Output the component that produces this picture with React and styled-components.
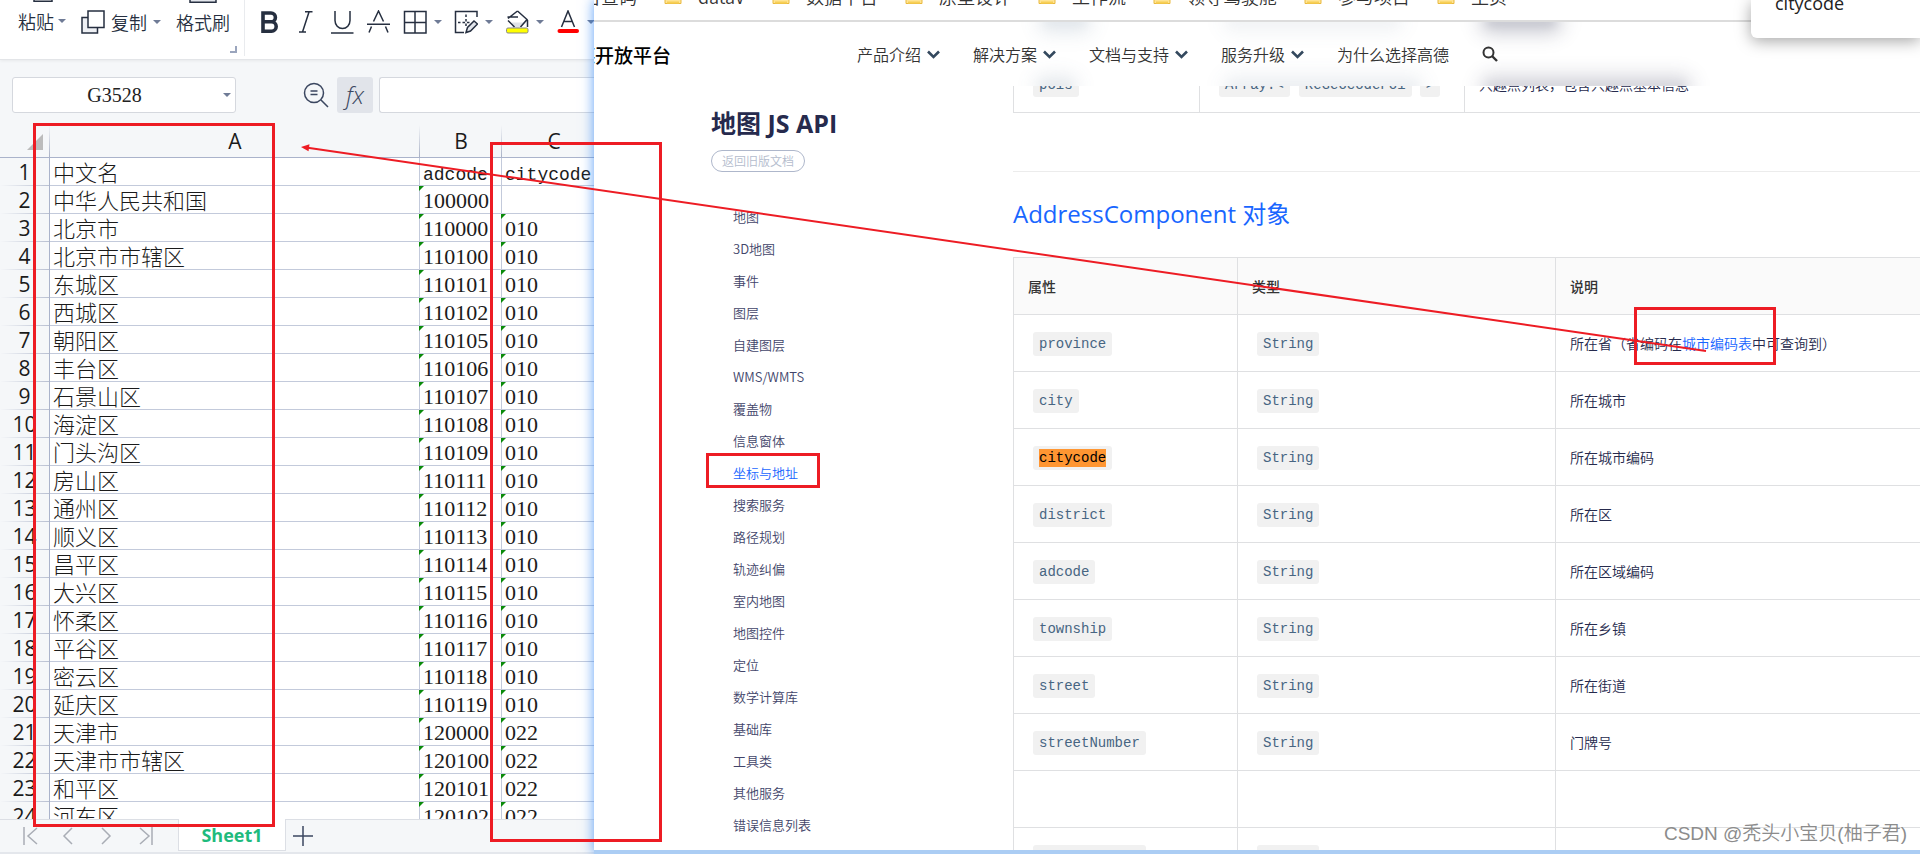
import styled, { createGlobalStyle, css } from "styled-components";

const sans = `"Open Sans", "Noto Sans CJK SC", sans-serif`;
const cjk = `"Noto Sans CJK SC", "Open Sans", sans-serif`;
const mono = `"Liberation Mono", "Noto Sans CJK SC", monospace`;
const red = "#ed1c24";

const GlobalStyle = createGlobalStyle`
  * {
    box-sizing: border-box;
  }

  body {
    margin: 0;
    font-family: ${sans};
    background: #fff;
  }

  button,
  input {
    padding: 0;
    border: none;
    background: none;
    font: inherit;
    color: inherit;
  }

  a {
    color: inherit;
    text-decoration: none;
  }
`;

const Desktop = styled.div`
  position: relative;
  display: flex;
  height: 100vh;
  overflow: hidden;
`;

/* ---------- spreadsheet ---------- */

const Sheet = styled.section`
  flex: 0 0 594px;
  display: flex;
  flex-direction: column;
  overflow: hidden;
  background: #f5f7f9;
`;

const Toolbar = styled.div`
  display: flex;
  flex: none;
  height: 60px;
  padding-left: 18px;
  background: #fff;
  border-bottom: 1px solid #e3e5e8;
  box-shadow: 0 1px 3px rgba(0, 0, 0, 0.06);
  color: #262f40;
  font-family: ${cjk};
  font-size: 18px;
  font-weight: 350;
  line-height: 26px;
  white-space: nowrap;
  overflow: hidden;
`;

const ClipGroup = styled.div`
  display: flex;
  flex: none;
  align-items: flex-start;
  gap: 15px;
`;

const TallButton = styled.button`
  display: flex;
  flex-direction: column;
  align-items: center;
  gap: 6px;
  margin-top: -20px;
`;

const Label = styled.span`
  display: flex;
  align-items: center;
  gap: 4px;
`;

const CopyButton = styled.button`
  display: flex;
  align-items: center;
  gap: 6px;
  margin-top: 9px;
`;

const Launcher = styled.button`
  flex: none;
  align-self: flex-end;
  width: 7px;
  height: 7px;
  margin-bottom: 6px;
  border-right: 2px solid #9aa5bd;
  border-bottom: 2px solid #9aa5bd;
`;

const FontGroup = styled.div`
  display: flex;
  flex: none;
  align-items: flex-start;
  gap: 12px;
  height: 56px;
  margin-left: 7px;
  padding: 9px 0 0 14px;
  border-left: 1px solid #e9ebee;
`;

const ToolButton = styled.button`
  display: flex;
  align-items: center;
  gap: 7px;
  height: 25px;
`;

const Caret = styled.i`
  border: 4px solid transparent;
  border-top-color: #6f7b96;
  border-bottom-width: 0;
`;

const FormulaBar = styled.div`
  display: flex;
  flex: none;
  align-items: center;
  padding: 17px 0 12px 12px;
`;

const NameBox = styled.div`
  display: flex;
  align-items: center;
  width: 224px;
  height: 36px;
  padding-right: 4px;
  border: 1px solid #d5d8de;
  border-radius: 3px;
  background: #fff;

  input {
    flex: 1;
    min-width: 0;
    padding-right: 7px;
    font-family: "Liberation Serif", serif;
    font-size: 20px;
    text-align: center;
    color: #222;
  }
`;

const ZoomButton = styled.button`
  display: flex;
  margin: 0 8px 0 67px;
`;

const FxButton = styled.button`
  width: 36px;
  height: 36px;
  margin-right: 6px;
  border-radius: 3px;
  background: #e1e4ea;
  color: #3b4760;
  font-size: 24px;
  font-style: italic;
  font-weight: 300;
  line-height: 32px;
`;

const FormulaInput = styled.input`
  flex: 1;
  min-width: 0;
  height: 36px;
  border: 1px solid #d5d8de;
  border-right: none;
  border-radius: 3px 0 0 3px;
  background: #fff;
`;

const GridArea = styled.div`
  flex: 1;
  min-height: 0;
  overflow: hidden;
`;

const Grid = styled.table`
  width: 606px;
  table-layout: fixed;
  border-collapse: separate;
  border-spacing: 0;
  background: #fff;
  color: #1b1b1b;

  th,
  td {
    padding: 0;
    white-space: nowrap;
  }
`;

const ColHead = styled.th`
  position: relative;
  height: 33px;
  background: linear-gradient(#f5f7f9, #a9b1c6) right / 1px 100% no-repeat #f5f7f9;
  border-bottom: 1px solid #aab3cb;
  font-size: 21px;
  font-weight: 400;
  line-height: 32px;
`;

const Corner = styled(ColHead)`
  &::after {
    content: "";
    position: absolute;
    right: 7px;
    bottom: 7px;
    border: solid transparent;
    border-width: 0 0 16px 16px;
    border-bottom-color: #bcbcbc;
  }
`;

const RowHead = styled.th`
  height: 28px;
  background: linear-gradient(90deg, #f5f7f9, #b9c0d2) bottom / 100% 1px no-repeat #f5f7f9;
  border-right: 1px solid #aab3cb;
  font-size: 21px;
  font-weight: 400;
  line-height: 27px;
`;

const cell = css`
  height: 28px;
  border-right: 1px solid #c3cadb;
  border-bottom: 1px solid #c3cadb;
`;

const NameCell = styled.td`
  ${cell}
  && {
    padding-left: 3px;
  }
  font-family: ${cjk};
  font-size: 22px;
  font-weight: 300;
  line-height: 27px;
`;

const CodeCell = styled.td`
  ${cell}
  position: relative;
  && {
    padding: ${(p) => (p.$head ? 6 : 2)}px 0 0 3px;
  }
  font-family: ${(p) => (p.$head ? `"Liberation Mono", monospace` : `"Liberation Serif", serif`)};
  font-size: ${(p) => (p.$head ? 18 : 22)}px;
  line-height: 20px;

  ${(p) =>
    p.$flag &&
    css`
      &::before {
        content: "";
        position: absolute;
        top: 0;
        left: -1px;
        border: solid transparent;
        border-width: 5px 5px 0 0;
        border-top-color: #0a8a0a;
      }
    `}
`;

const TabBar = styled.div`
  display: flex;
  flex: none;
  align-items: flex-start;
  height: 35px;
  border-top: 1px solid #dcdfe5;
  box-shadow: inset 0 -2px 0 #e4e7ec;
`;

const SheetNav = styled.div`
  display: flex;
  gap: 23px;
  width: 178px;
  padding: 7px 0 0 22px;

  button {
    display: flex;
  }
`;

const SheetTab = styled.button`
  width: 108px;
  height: 32px;
  margin-top: -1px;
  border: 1px solid #dcdfe5;
  border-top: none;
  background: #fff;
  color: #1fbb7d;
  font-size: 18px;
  font-weight: 700;
  line-height: 30px;
`;

const AddTab = styled.button`
  display: flex;
  margin: 6px 0 0 7px;
`;

/* ---------- browser ---------- */

const Browser = styled.section`
  position: relative;
  flex: 1;
  min-width: 0;
  display: flex;
  flex-direction: column;
  background: #fff;
  border-bottom: 4px solid #abcdf4;
  box-shadow: 0 0 12px rgba(40, 130, 245, 0.75);
`;

const Bookmarks = styled.nav`
  display: flex;
  flex: none;
  align-items: flex-start;
  gap: 27px;
  height: 22px;
  border-bottom: 2px solid #dcdcdc;
  overflow: hidden;
  color: #333;
  font-family: ${cjk};
  font-size: 18px;
  font-weight: 350;
  line-height: 22px;
  white-space: nowrap;
`;

const Bookmark = styled.a`
  display: flex;
  align-items: center;
  gap: 16px;
  margin: -15px 0 0 ${(p) => (p.$cut ? -11 : 0)}px;
`;

const FindBar = styled.div`
  position: absolute;
  z-index: 3;
  top: 0;
  right: 0;
  width: 169px;
  height: 38px;
  padding-left: 24px;
  border-radius: 0 0 0 6px;
  background: #fff;
  box-shadow: 0 3px 16px rgba(0, 0, 0, 0.36);

  input {
    display: block;
    width: 100%;
    height: 26px;
    margin-top: -10px;
    font-size: 18px;
    color: #222;
  }
`;

const Page = styled.div`
  position: relative;
  flex: 1;
  min-height: 0;
  overflow: hidden;
`;

const SiteHeader = styled.header`
  position: absolute;
  z-index: 2;
  top: 0;
  left: 0;
  right: 0;
  display: flex;
  align-items: center;
  height: 64px;
  background: #fff;
  font-family: ${cjk};
  overflow: hidden;
`;

/* frosted traces of the rows scrolled under the header */
const Frost = styled.span`
  position: absolute;
  ${(p) => (p.$low ? "bottom: -4px" : "top: -4px")};
  left: ${(p) => p.$x}px;
  width: ${(p) => p.$w}px;
  height: 8px;
  border-radius: 4px;
  background: ${(p) => p.$tone};
  box-shadow: 0 0 18px 6px ${(p) => p.$tone};
  filter: blur(5px);
`;

const Brand = styled.a`
  position: relative;
  width: 263px;
  color: #000;
  font-size: 19px;
  font-weight: 500;
  text-indent: -18px;
  white-space: nowrap;
`;

const SiteNav = styled.nav`
  position: relative;
  display: flex;
  align-items: center;
  gap: 33px;
  color: #333;
  font-size: 16px;
  font-weight: 350;
  white-space: nowrap;

  a,
  button {
    display: flex;
    align-items: center;
    gap: 6px;
  }
`;

const Columns = styled.div`
  display: flex;
  padding-left: 117px;
`;

const Aside = styled.aside`
  flex: 0 0 302px;
  padding-top: 84px;
  font-family: ${cjk};

  h2 {
    margin: 0;
    color: #262a4d;
    font-family: ${sans};
    font-size: 25px;
    font-weight: 700;
    line-height: 34px;
  }
`;

const OldDocs = styled.a`
  display: block;
  width: max-content;
  height: 22px;
  margin-top: 10px;
  padding: 0 10px;
  border: 1px solid #aeb7cb;
  border-radius: 11px;
  color: #b4bccd;
  font-size: 12px;
  font-weight: 350;
  line-height: 20px;
`;

const Menu = styled.ul`
  margin: 29px 0 0;
  padding: 0 0 0 22px;
  list-style: none;
`;

const MenuItem = styled.li`
  height: 32px;
  color: ${(p) => (p.$active ? "#1966ff" : "#42456a")};
  font-size: 13px;
  font-weight: 350;
  line-height: 32px;
`;

const Article = styled.main`
  flex: 1;
  min-width: 0;
  margin-top: 34px;

  h3 {
    margin: 22px 0 23px;
    color: #1966ff;
    font-family: ${sans};
    font-size: 24px;
    font-weight: 400;
    line-height: 40px;
  }

  hr {
    height: 1px;
    margin: 58px 0 0;
    border: none;
    background: #ececec;
  }
`;

const PropTable = styled.table`
  width: 100%;
  table-layout: fixed;
  border-collapse: separate;
  border-spacing: 0;
  border-left: 1px solid #dfe0e2;
  border-top: ${(p) => (p.$open ? "none" : "1px solid #dfe0e2")};
  color: #262a4d;
  font-family: ${cjk};
  font-size: 14px;
  font-weight: 350;
  line-height: 24px;

  th,
  td {
    height: 57px;
    padding: 0 14px;
    border-right: 1px solid #dfe0e2;
    border-bottom: 1px solid #dfe0e2;
    text-align: left;
    white-space: nowrap;
  }

  th {
    background: #fafafa;
    color: #333;
    font-weight: 500;
  }

  th:last-child,
  td:last-child {
    border-right: none;
  }
`;

const Code = styled.code`
  display: inline-block;
  height: 24px;
  margin: 0 ${(p) => (p.$tight ? 4 : 5)}px;
  padding: 0 6px;
  border-radius: 3px;
  background: #f1f1f1;
  color: #476582;
  font-family: ${mono};
  font-size: 14px;
  font-weight: 400;
  vertical-align: middle;

  mark {
    display: inline-block;
    height: 18px;
    background: #ff9632;
    color: #000;
    line-height: 18px;
  }
`;

const DocLink = styled.a`
  color: #1966ff;
`;

/* ---------- overlay ---------- */

const Marks = styled.svg`
  position: absolute;
  z-index: 5;
  inset: 0;
  width: 100%;
  height: 100%;
  pointer-events: none;
`;

const Watermark = styled.div`
  position: absolute;
  z-index: 6;
  right: 13px;
  bottom: 5px;
  color: #8c8c8c;
  font-family: "Liberation Sans", "Noto Sans CJK SC", sans-serif;
  font-size: 19px;
  font-weight: 350;
  line-height: 30px;
  text-shadow: 1px 1px 1px #fff;
`;

const rows = [
  ["中文名", "adcode", "citycode"],
  ["中华人民共和国", "100000", ""],
  ["北京市", "110000", "010"],
  ["北京市市辖区", "110100", "010"],
  ["东城区", "110101", "010"],
  ["西城区", "110102", "010"],
  ["朝阳区", "110105", "010"],
  ["丰台区", "110106", "010"],
  ["石景山区", "110107", "010"],
  ["海淀区", "110108", "010"],
  ["门头沟区", "110109", "010"],
  ["房山区", "110111", "010"],
  ["通州区", "110112", "010"],
  ["顺义区", "110113", "010"],
  ["昌平区", "110114", "010"],
  ["大兴区", "110115", "010"],
  ["怀柔区", "110116", "010"],
  ["平谷区", "110117", "010"],
  ["密云区", "110118", "010"],
  ["延庆区", "110119", "010"],
  ["天津市", "120000", "022"],
  ["天津市市辖区", "120100", "022"],
  ["和平区", "120101", "022"],
  ["河东区", "120102", "022"],
];

const bookmarks = ["dataV", "数据平台", "原型设计", "工作流", "领导驾驶舱", "参与项目", "主页"];

const navItems = ["产品介绍", "解决方案", "文档与支持", "服务升级"];

const menu = [
  "地图",
  "3D地图",
  "事件",
  "图层",
  "自建图层",
  "WMS/WMTS",
  "覆盖物",
  "信息窗体",
  "坐标与地址",
  "搜索服务",
  "路径规划",
  "轨迹纠偏",
  "室内地图",
  "地图控件",
  "定位",
  "数学计算库",
  "基础库",
  "工具类",
  "其他服务",
  "错误信息列表",
];

const props = [
  ["city", "所在城市"],
  ["citycode", "所在城市编码"],
  ["district", "所在区"],
  ["adcode", "所在区域编码"],
  ["township", "所在乡镇"],
  ["street", "所在街道"],
  ["streetNumber", "门牌号"],
];

const Icon = ({ w = 24, h = 24, children, ...rest }) => (
  <svg
    width={w}
    height={h}
    viewBox={`0 0 ${w} ${h}`}
    fill="none"
    stroke="#262f40"
    strokeWidth="1.5"
    aria-hidden="true"
    {...rest}
  >
    {children}
  </svg>
);

const FolderIcon = () => (
  <svg width="18" height="16" viewBox="0 0 18 16" aria-hidden="true">
    <path d="M1 1h6l2 2h8v12.500H1z" fill="#ffe493" stroke="#e9b93f" />
    <path d="M3 14.500h12" stroke="#f7cf55" strokeWidth="2" />
  </svg>
);

const SheetPane = () => (
  <Sheet>
    <Toolbar>
      <ClipGroup>
        <TallButton>
          <Icon w={22} h={22}>
            <path d="M1 2h14v6M3 8h18v13.200H3z" />
          </Icon>
          <Label>
            粘贴
            <Caret />
          </Label>
        </TallButton>
        <CopyButton>
          <Icon>
            <path d="M7 7.500H1v15.500h15.500v-5.500" fill="#eef0f4" />
            <path d="M7 1h16v16.500H7z" fill="#fff" />
          </Icon>
          复制
          <Caret />
        </CopyButton>
        <TallButton>
          <Icon w={28} h={23}>
            <path d="M1 4h26v18.200H1z" fill="#e3e6ec" />
          </Icon>
          <Label>格式刷</Label>
        </TallButton>
      </ClipGroup>
      <Launcher aria-label="剪贴板" />
      <FontGroup>
        <ToolButton aria-label="加粗">
          <Icon>
            <path d="M4 3h8a4.300 4.300 0 0 1 0 8.800H4zM4 11.800h8.500a4.700 4.700 0 0 1 0 9.400H4z" strokeWidth="3.600" />
          </Icon>
        </ToolButton>
        <ToolButton aria-label="倾斜">
          <Icon>
            <path d="M10 1.800h7.500M4 22h7M14 2l-6.500 20" />
          </Icon>
        </ToolButton>
        <ToolButton aria-label="下划线">
          <Icon>
            <path d="M4 1v9.500a7.500 8 0 0 0 15 0V1M0 23h22.500" />
          </Icon>
        </ToolButton>
        <ToolButton aria-label="删除线">
          <Icon>
            <path d="M0 14.200h23M6.500 11.500L11.500 1l5 10.500M4.500 16.500L2 22.500M18.500 16.500l2.500 6" />
          </Icon>
        </ToolButton>
        <ToolButton aria-label="边框">
          <Icon>
            <path d="M1.500 1.500h21.500v21.500H1.500zM12 1.500v21.500M1.500 12.500h21.500" />
          </Icon>
          <Caret />
        </ToolButton>
        <ToolButton aria-label="绘图边框">
          <Icon>
            <path d="M23 7V1.500H1.500v21H10" />
            <path d="M12 4.500v13M4 12.500h13" strokeDasharray="2.500 2" />
            <path d="M12 22.500l1.500-5 6.500-6.500 3.500 3-7 7z" fill="#e3e6ec" />
          </Icon>
          <Caret />
        </ToolButton>
        <ToolButton aria-label="填充颜色">
          <Icon>
            <path d="M6.500 12.500h15l-8 6H8z" fill="#dfe2e8" stroke="none" />
            <path d="M12.500 1L22 9.500 15.500 17M12.500 1L3 8.500M2.500 7H13M3 10.500L9.500 17M22.500 10v7" />
            <rect x="1.500" y="18" width="21.500" height="5" rx="1.500" fill="#ff0" stroke="#888" strokeWidth="1" />
          </Icon>
          <Caret />
        </ToolButton>
        <ToolButton aria-label="字体颜色">
          <Icon>
            <path d="M5.500 17L12 1l6.500 16M8 11.500h8" />
            <path d="M3.500 21h17.500" stroke="#f00" strokeWidth="4" strokeLinecap="round" />
          </Icon>
          <Caret />
        </ToolButton>
      </FontGroup>
    </Toolbar>

    <FormulaBar>
      <NameBox>
        <input aria-label="名称框" defaultValue="G3528" />
        <Caret />
      </NameBox>
      <ZoomButton aria-label="浏览公式结果">
        <Icon w={26} h={26} stroke="#3b4760">
          <circle cx="11" cy="11" r="9.500" />
          <path d="M7.500 9h7M7.500 12.500h7M18 18l7 7" />
        </Icon>
      </ZoomButton>
      <FxButton>fx</FxButton>
      <FormulaInput aria-label="编辑栏" />
    </FormulaBar>

    <GridArea>
      <Grid>
        <colgroup>
          <col width="50" />
          <col width="370" />
          <col width="82" />
          <col width="104" />
        </colgroup>
        <thead>
          <tr>
            <Corner />
            <ColHead>A</ColHead>
            <ColHead>B</ColHead>
            <ColHead>C</ColHead>
          </tr>
        </thead>
        <tbody>
          {rows.map(([name, adcode, citycode], i) => (
            <tr key={adcode}>
              <RowHead>{i + 1}</RowHead>
              <NameCell>{name}</NameCell>
              <CodeCell $head={i === 0} $flag={i > 0}>
                {adcode}
              </CodeCell>
              <CodeCell $head={i === 0} $flag={i > 1}>
                {citycode}
              </CodeCell>
            </tr>
          ))}
        </tbody>
      </Grid>
    </GridArea>

    <TabBar>
      <SheetNav>
        <button aria-label="第一个">
          <Icon w={16} h={18} stroke="#a9adb5">
            <path d="M2 0v18M15 1L6 9l9 8" />
          </Icon>
        </button>
        <button aria-label="上一个">
          <Icon w={16} h={18} stroke="#a9adb5">
            <path d="M11 1L3 9l8 8" />
          </Icon>
        </button>
        <button aria-label="下一个">
          <Icon w={16} h={18} stroke="#a9adb5">
            <path d="M2 1l8 8-8 8" />
          </Icon>
        </button>
        <button aria-label="最后一个">
          <Icon w={16} h={18} stroke="#a9adb5">
            <path d="M1 1l9 8-9 8M13 0v18" />
          </Icon>
        </button>
      </SheetNav>
      <SheetTab>Sheet1</SheetTab>
      <AddTab aria-label="新建工作表">
        <Icon w={20} h={20} stroke="#3b4760">
          <path d="M10 0v20M0 10h20" />
        </Icon>
      </AddTab>
    </TabBar>
  </Sheet>
);

const BrowserPane = () => (
  <Browser>
    <Bookmarks>
      <Bookmark href="#" $cut>
        台查码
      </Bookmark>
      {bookmarks.map((b) => (
        <Bookmark href="#" key={b}>
          <FolderIcon />
          {b}
        </Bookmark>
      ))}
    </Bookmarks>
    <FindBar>
      <input aria-label="查找" defaultValue="citycode" />
    </FindBar>

    <Page>
      <SiteHeader>
        <Frost $x={450} $w={42} $tone="rgba(71, 101, 130, 0.16)" />
        <Frost $x={634} $w={170} $tone="rgba(71, 101, 130, 0.08)" />
        <Frost $x={892} $w={70} $tone="rgba(38, 42, 77, 0.28)" />
        <Frost $low $x={446} $w={32} $tone="rgba(71, 101, 130, 0.14)" />
        <Frost $low $x={634} $w={190} $tone="rgba(71, 101, 130, 0.1)" />
        <Frost $low $x={892} $w={200} $tone="rgba(38, 42, 77, 0.2)" />
        <Brand href="#">德开放平台</Brand>
        <SiteNav>
          {navItems.map((item) => (
            <a href="#" key={item}>
              {item}
              <Icon w={13} h={9} stroke="#34495e" strokeWidth="2.600">
                <path d="M1 1.500l5.500 5.500L12 1.500" />
              </Icon>
            </a>
          ))}
          <a href="#">为什么选择高德</a>
          <button aria-label="搜索">
            <Icon w={16} h={16} stroke="#333" strokeWidth="2">
              <circle cx="6.500" cy="6.500" r="5" />
              <path d="M10 10l5 5" strokeWidth="2.400" />
            </Icon>
          </button>
        </SiteNav>
      </SiteHeader>

      <Columns>
        <Aside>
          <h2>地图 JS API</h2>
          <OldDocs href="#">返回旧版文档</OldDocs>
          <Menu>
            {menu.map((item) => (
              <MenuItem key={item} $active={item === "坐标与地址"}>
                <a href="#">{item}</a>
              </MenuItem>
            ))}
          </Menu>
        </Aside>

        <Article>
          <PropTable $open>
            <colgroup>
              <col width="186" />
              <col width="265" />
              <col />
            </colgroup>
            <tbody>
              <tr>
                <td>
                  <Code>pois</Code>
                </td>
                <td>
                  <Code>Array.&lt;</Code>
                  <Code $tight>ReGeocodePoi</Code>
                  <Code $tight>&gt;</Code>
                </td>
                <td>兴趣点列表，包含兴趣点基本信息</td>
              </tr>
            </tbody>
          </PropTable>
          <hr />
          <h3>AddressComponent 对象</h3>
          <PropTable>
            <colgroup>
              <col width="224" />
              <col width="318" />
              <col />
            </colgroup>
            <thead>
              <tr>
                <th>属性</th>
                <th>类型</th>
                <th>说明</th>
              </tr>
            </thead>
            <tbody>
              <tr>
                <td>
                  <Code>province</Code>
                </td>
                <td>
                  <Code>String</Code>
                </td>
                <td>
                  所在省（省编码在<DocLink href="#">城市编码表</DocLink>中可查询到）
                </td>
              </tr>
              {props.map(([name, desc]) => (
                <tr key={name}>
                  <td>
                    <Code>{name === "citycode" ? <mark>{name}</mark> : name}</Code>
                  </td>
                  <td>
                    <Code>String</Code>
                  </td>
                  <td>{desc}</td>
                </tr>
              ))}
              <tr>
                <td />
                <td />
                <td />
              </tr>
              <tr>
                <td>
                  <Code>neighborhood</Code>
                </td>
                <td>
                  <Code>String</Code>
                </td>
                <td />
              </tr>
            </tbody>
          </PropTable>
        </Article>
      </Columns>
    </Page>
  </Browser>
);

const App = () => (
  <Desktop>
    <GlobalStyle />
    <SheetPane />
    <BrowserPane />
    <Marks fill="none" stroke={red} strokeWidth="3" aria-hidden="true">
      <rect x="34.500" y="124.500" width="239" height="701" />
      <rect x="491.500" y="143.500" width="169" height="697" />
      <rect x="707.500" y="454.500" width="111" height="32" />
      <rect x="1635.500" y="308.500" width="139" height="55" />
      <path d="M1706 351L306 147.500" strokeWidth="2" />
      <path d="M301 147l8.500-2.800-1 7z" fill={red} stroke="none" />
    </Marks>
    <Watermark>CSDN @秃头小宝贝(柚子君)</Watermark>
  </Desktop>
);

export default App;
